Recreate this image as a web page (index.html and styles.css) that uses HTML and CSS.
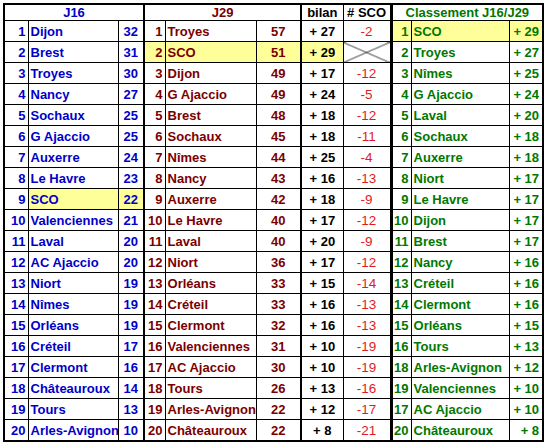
FILE: index.html
```html
<!DOCTYPE html>
<html lang="fr">
<head>
<meta charset="utf-8">
<title>Classement J16/J29</title>
<link rel="stylesheet" href="styles.css">
</head>
<body>
<table class="board">
<colgroup>
<col class="w-r1"><col class="w-t1"><col class="w-p1">
<col class="w-r2"><col class="w-t2"><col class="w-p2">
<col class="w-bil"><col class="w-sco">
<col class="w-r3"><col class="w-t3"><col class="w-b3">
</colgroup>
<thead>
<tr class="head">
<th colspan="3" class="blue sepR">J16</th>
<th colspan="3" class="red sepR">J29</th>
<th class="black">bilan</th>
<th class="black sepR3">#&nbsp;SCO</th>
<th colspan="3" class="green">Classement J16/J29</th>
</tr>
</thead>
<tbody>
<tr><td class="rk blue">1</td><td class="tm blue">Dijon</td><td class="pt blue sepR">32</td><td class="rk red">1</td><td class="tm red">Troyes</td><td class="pt red sepR">57</td><td class="bil">+ 27</td><td class="sco sepR3">-2</td><td class="rk green hl">1</td><td class="tm green hl">SCO</td><td class="cb green hl">+ 29</td></tr>
<tr><td class="rk blue">2</td><td class="tm blue">Brest</td><td class="pt blue sepR">31</td><td class="rk red hl">2</td><td class="tm red hl">SCO</td><td class="pt red sepR hl">51</td><td class="bil hl">+ 29</td><td class="sco sepR3 cross"></td><td class="rk green">2</td><td class="tm green">Troyes</td><td class="cb green">+ 27</td></tr>
<tr><td class="rk blue">3</td><td class="tm blue">Troyes</td><td class="pt blue sepR">30</td><td class="rk red">3</td><td class="tm red">Dijon</td><td class="pt red sepR">49</td><td class="bil">+ 17</td><td class="sco sepR3">-12</td><td class="rk green">3</td><td class="tm green">Nîmes</td><td class="cb green">+ 25</td></tr>
<tr><td class="rk blue">4</td><td class="tm blue">Nancy</td><td class="pt blue sepR">27</td><td class="rk red">4</td><td class="tm red">G Ajaccio</td><td class="pt red sepR">49</td><td class="bil">+ 24</td><td class="sco sepR3">-5</td><td class="rk green">4</td><td class="tm green">G Ajaccio</td><td class="cb green">+ 24</td></tr>
<tr><td class="rk blue">5</td><td class="tm blue">Sochaux</td><td class="pt blue sepR">25</td><td class="rk red">5</td><td class="tm red">Brest</td><td class="pt red sepR">48</td><td class="bil">+ 18</td><td class="sco sepR3">-12</td><td class="rk green">5</td><td class="tm green">Laval</td><td class="cb green">+ 20</td></tr>
<tr><td class="rk blue">6</td><td class="tm blue">G Ajaccio</td><td class="pt blue sepR">25</td><td class="rk red">6</td><td class="tm red">Sochaux</td><td class="pt red sepR">45</td><td class="bil">+ 18</td><td class="sco sepR3">-11</td><td class="rk green">6</td><td class="tm green">Sochaux</td><td class="cb green">+ 18</td></tr>
<tr><td class="rk blue">7</td><td class="tm blue">Auxerre</td><td class="pt blue sepR">24</td><td class="rk red">7</td><td class="tm red">Nîmes</td><td class="pt red sepR">44</td><td class="bil">+ 25</td><td class="sco sepR3">-4</td><td class="rk green">7</td><td class="tm green">Auxerre</td><td class="cb green">+ 18</td></tr>
<tr><td class="rk blue">8</td><td class="tm blue">Le Havre</td><td class="pt blue sepR">23</td><td class="rk red">8</td><td class="tm red">Nancy</td><td class="pt red sepR">43</td><td class="bil">+ 16</td><td class="sco sepR3">-13</td><td class="rk green">8</td><td class="tm green">Niort</td><td class="cb green">+ 17</td></tr>
<tr><td class="rk blue">9</td><td class="tm blue hl">SCO</td><td class="pt blue sepR hl">22</td><td class="rk red">9</td><td class="tm red">Auxerre</td><td class="pt red sepR">42</td><td class="bil">+ 18</td><td class="sco sepR3">-9</td><td class="rk green">9</td><td class="tm green">Le Havre</td><td class="cb green">+ 17</td></tr>
<tr><td class="rk blue">10</td><td class="tm blue">Valenciennes</td><td class="pt blue sepR">21</td><td class="rk red">10</td><td class="tm red">Le Havre</td><td class="pt red sepR">40</td><td class="bil">+ 17</td><td class="sco sepR3">-12</td><td class="rk green">10</td><td class="tm green">Dijon</td><td class="cb green">+ 17</td></tr>
<tr><td class="rk blue">11</td><td class="tm blue">Laval</td><td class="pt blue sepR">20</td><td class="rk red">11</td><td class="tm red">Laval</td><td class="pt red sepR">40</td><td class="bil">+ 20</td><td class="sco sepR3">-9</td><td class="rk green">11</td><td class="tm green">Brest</td><td class="cb green">+ 17</td></tr>
<tr><td class="rk blue">12</td><td class="tm blue">AC Ajaccio</td><td class="pt blue sepR">20</td><td class="rk red">12</td><td class="tm red">Niort</td><td class="pt red sepR">36</td><td class="bil">+ 17</td><td class="sco sepR3">-12</td><td class="rk green">12</td><td class="tm green">Nancy</td><td class="cb green">+ 16</td></tr>
<tr><td class="rk blue">13</td><td class="tm blue">Niort</td><td class="pt blue sepR">19</td><td class="rk red">13</td><td class="tm red">Orléans</td><td class="pt red sepR">33</td><td class="bil">+ 15</td><td class="sco sepR3">-14</td><td class="rk green">13</td><td class="tm green">Créteil</td><td class="cb green">+ 16</td></tr>
<tr><td class="rk blue">14</td><td class="tm blue">Nîmes</td><td class="pt blue sepR">19</td><td class="rk red">14</td><td class="tm red">Créteil</td><td class="pt red sepR">33</td><td class="bil">+ 16</td><td class="sco sepR3">-13</td><td class="rk green">14</td><td class="tm green">Clermont</td><td class="cb green">+ 16</td></tr>
<tr><td class="rk blue">15</td><td class="tm blue">Orléans</td><td class="pt blue sepR">19</td><td class="rk red">15</td><td class="tm red">Clermont</td><td class="pt red sepR">32</td><td class="bil">+ 16</td><td class="sco sepR3">-13</td><td class="rk green">15</td><td class="tm green">Orléans</td><td class="cb green">+ 15</td></tr>
<tr><td class="rk blue">16</td><td class="tm blue">Créteil</td><td class="pt blue sepR">17</td><td class="rk red">16</td><td class="tm red">Valenciennes</td><td class="pt red sepR">31</td><td class="bil">+ 10</td><td class="sco sepR3">-19</td><td class="rk green">16</td><td class="tm green">Tours</td><td class="cb green">+ 13</td></tr>
<tr><td class="rk blue">17</td><td class="tm blue">Clermont</td><td class="pt blue sepR">16</td><td class="rk red">17</td><td class="tm red">AC Ajaccio</td><td class="pt red sepR">30</td><td class="bil">+ 10</td><td class="sco sepR3">-19</td><td class="rk green">18</td><td class="tm green">Arles-Avignon</td><td class="cb green">+ 12</td></tr>
<tr><td class="rk blue">18</td><td class="tm blue">Châteauroux</td><td class="pt blue sepR">14</td><td class="rk red">18</td><td class="tm red">Tours</td><td class="pt red sepR">26</td><td class="bil">+ 13</td><td class="sco sepR3">-16</td><td class="rk green">19</td><td class="tm green">Valenciennes</td><td class="cb green">+ 10</td></tr>
<tr><td class="rk blue">19</td><td class="tm blue">Tours</td><td class="pt blue sepR">13</td><td class="rk red">19</td><td class="tm red">Arles-Avignon</td><td class="pt red sepR">22</td><td class="bil">+ 12</td><td class="sco sepR3">-17</td><td class="rk green">17</td><td class="tm green">AC Ajaccio</td><td class="cb green">+ 10</td></tr>
<tr><td class="rk blue">20</td><td class="tm blue">Arles-Avignon</td><td class="pt blue sepR">10</td><td class="rk red">20</td><td class="tm red">Châteauroux</td><td class="pt red sepR">22</td><td class="bil">+ 8</td><td class="sco sepR3">-21</td><td class="rk green">20</td><td class="tm green">Châteauroux</td><td class="cb green">+ 8</td></tr>
</tbody>
</table>
</body>
</html>
```

FILE: styles.css
```css
html, body {
  background: #ffffff;
}
body {
  margin: 3px;
  font-family: "Liberation Sans", Arial, sans-serif;
  font-size: 13px;
  font-weight: bold;
}
.board {
  border-collapse: collapse;
  table-layout: fixed;
  width: 541px;
  border: 2px solid #000;
}
.w-r1 { width: 24px; }
.w-t1 { width: 90px; }
.w-p1 { width: 26px; }
.w-r2 { width: 21px; }
.w-t2 { width: 91px; }
.w-p2 { width: 45px; }
.w-bil { width: 42px; }
.w-sco { width: 48px; }
.w-r3 { width: 20px; }
.w-t3 { width: 98px; }
.w-b3 { width: 34px; }

.board th,
.board td {
  border: 1px solid #000;
  padding: 0;
  white-space: nowrap;
  overflow: hidden;
  line-height: 15px;
}
.head th {
  height: 15px;
  text-align: center;
  font-weight: bold;
}
.board tbody td {
  height: 19px;
  padding-top: 1px;
}
.sepR { border-right: 2px solid #000 !important; }
.sepR3 { border-right: 3px solid #000 !important; }

.rk { text-align: right; padding-right: 2px !important; }
.tm { text-align: left; padding-left: 2px !important; }
.pt { text-align: center; }
.bil { text-align: center; color: #000; }
.sco { text-align: center; color: #e01b1b; font-weight: normal; font-size: 13.5px; }
.cb { text-align: right; padding-right: 3px !important; }

.blue { color: #0000c8; }
.red { color: #7a0000; }
.green { color: #007800; }
.black { color: #000; }
.hl { background: #ffff99; }

.cross {
  background:
    linear-gradient(to top right, transparent calc(50% - 0.8px), #222 50%, transparent calc(50% + 0.8px)),
    linear-gradient(to bottom right, transparent calc(50% - 0.8px), #222 50%, transparent calc(50% + 0.8px));
}
```
